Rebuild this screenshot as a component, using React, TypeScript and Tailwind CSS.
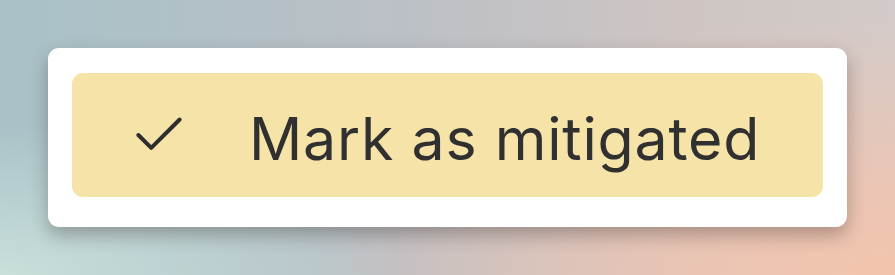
import React from 'react';
import { Check } from 'lucide-react';

export default function App() {
  return (
    <div className="w-[895px] h-[275px] flex items-center justify-center bg-[radial-gradient(ellipse_65%_95%_at_100%_100%,#f3c4ac_0%,#f0c4b0cc_35%,transparent_100%),radial-gradient(ellipse_45%_55%_at_0%_100%,#c8dfdb_0%,transparent_100%),linear-gradient(90deg,#a8c2c7_0%,#bbc0c6_45%,#cec5c3_75%,#d3cbc9_100%)]">
      <div className="w-[799px] h-[179px] bg-white rounded-[11px] pl-[24px] pr-[24px] pt-[25px] pb-[30px] shadow-[0_8px_18px_rgba(40,30,30,0.32)]">
        <button className="w-full h-full flex items-center bg-[#f6e3a8] rounded-[11px] text-left">
          <Check size={62} strokeWidth={1.55} className="ml-[56px] text-[#2e2e2e] shrink-0" />
          <span className="ml-[59px] mt-[6px] text-[59px] leading-none tracking-[0.8px] text-[#303030] font-['Inter',sans-serif]">
            Mark as mitigated
          </span>
        </button>
      </div>
    </div>
  );
}
